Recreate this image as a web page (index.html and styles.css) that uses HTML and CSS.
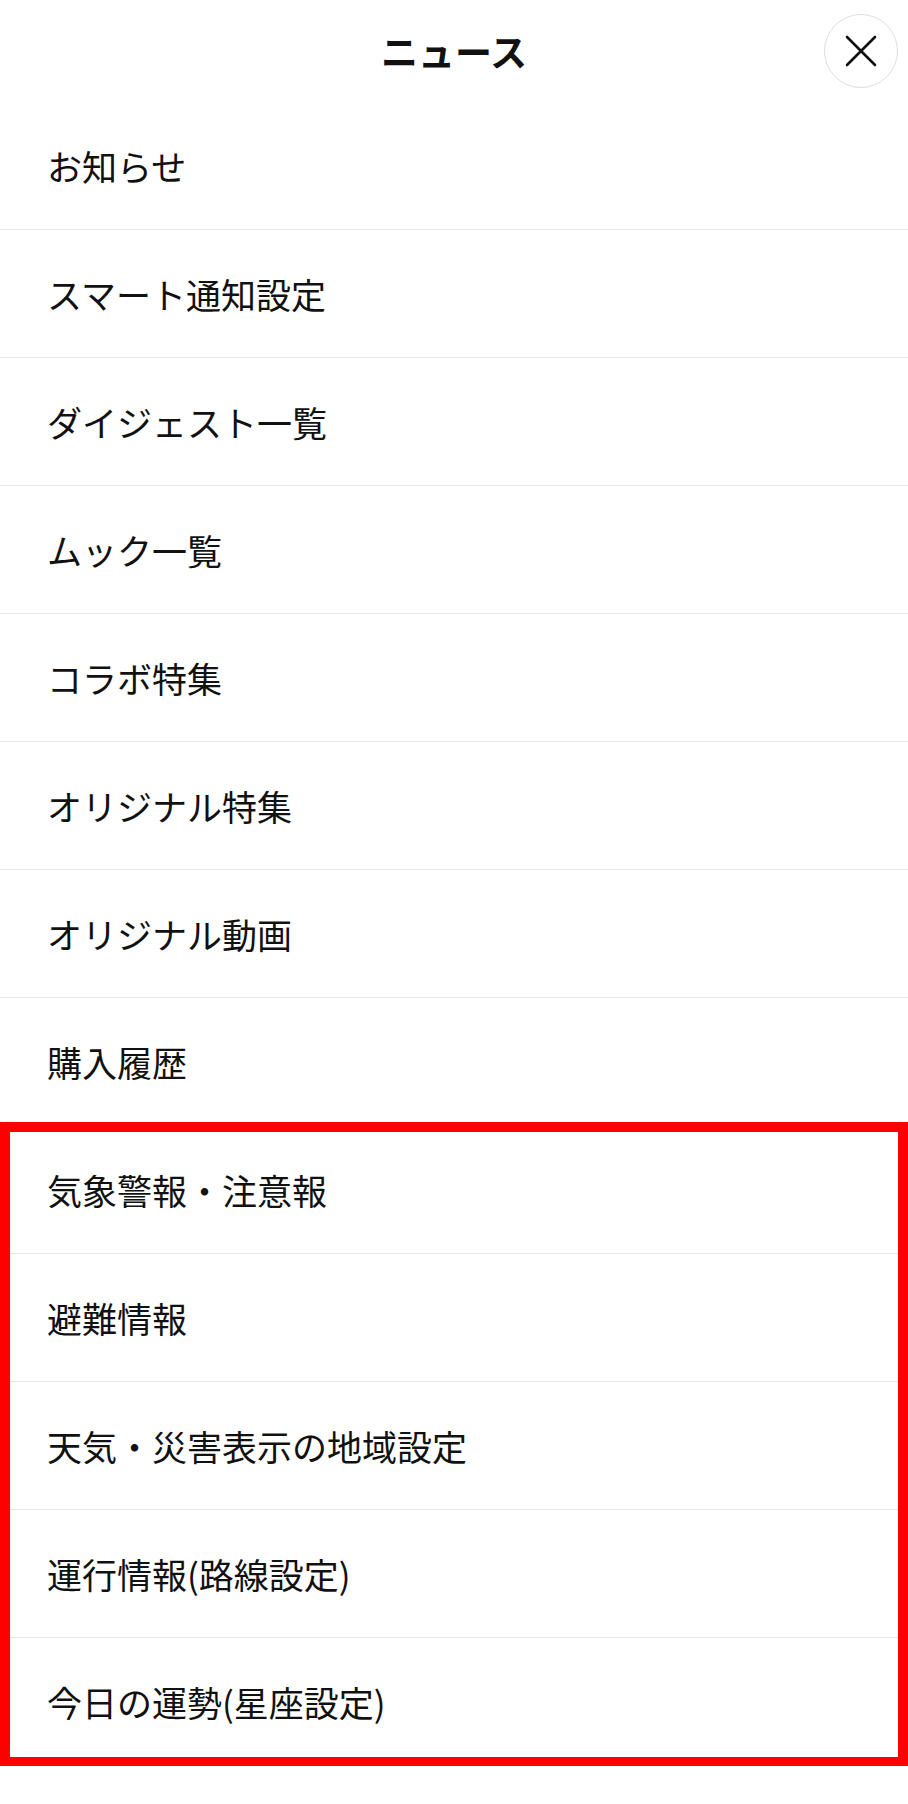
FILE: index.html
```html
<!DOCTYPE html>
<html lang="ja">
<head>
<meta charset="utf-8">
<title>ニュース</title>
<link rel="stylesheet" href="styles.css">
</head>
<body>
<div class="page">
  <header class="header">
    <div class="header-side"></div>
    <h1 class="title">ニュース</h1>
    <div class="header-side header-right">
      <button class="close" aria-label="閉じる">
        <svg width="32" height="32" viewBox="0 0 32 32" aria-hidden="true">
          <path d="M2 2 L30 30 M30 2 L2 30" stroke="#111" stroke-width="2.6" stroke-linecap="round" fill="none"/>
        </svg>
      </button>
    </div>
  </header>
  <ul class="menu">
    <li class="item">お知らせ</li>
    <li class="item">スマート通知設定</li>
    <li class="item">ダイジェスト一覧</li>
    <li class="item">ムック一覧</li>
    <li class="item">コラボ特集</li>
    <li class="item">オリジナル特集</li>
    <li class="item">オリジナル動画</li>
    <li class="item">購入履歴</li>
  </ul>
  <ul class="menu menu-highlight">
    <li class="item">気象警報・注意報</li>
    <li class="item">避難情報</li>
    <li class="item">天気・災害表示の地域設定</li>
    <li class="item">運行情報(路線設定)</li>
    <li class="item">今日の運勢(星座設定)</li>
  </ul>
</div>
</body>
</html>
```

FILE: styles.css
```css
* {
  box-sizing: border-box;
}

html, body {
  margin: 0;
  padding: 0;
  background: #ffffff;
}

body {
  font-family: "Noto Sans CJK JP", "Noto Sans", sans-serif;
  color: #111111;
}

.page {
  width: 908px;
}

.header {
  height: 102px;
  display: grid;
  grid-template-columns: 1fr auto 1fr;
  align-items: center;
}

.title {
  margin: 0;
  font-size: 37px;
  font-weight: 700;
  line-height: 1;
  letter-spacing: 0;
}

.header-right {
  display: flex;
  justify-content: flex-end;
  padding-right: 10px;
}

.close {
  width: 74px;
  height: 74px;
  border-radius: 50%;
  border: 1.5px solid #dedede;
  background: #ffffff;
  display: flex;
  align-items: center;
  justify-content: center;
  padding: 0;
  margin: 0;
}

.menu {
  list-style: none;
  margin: 0;
  padding: 0;
}

.item {
  height: 128px;
  display: flex;
  align-items: center;
  padding-left: 47px;
  font-size: 35px;
  font-weight: 400;
  line-height: 1;
  border-bottom: 1px solid #e5e5e5;
}

.menu-highlight {
  position: relative;
}

.menu-highlight::after {
  content: "";
  position: absolute;
  top: -4px;
  bottom: -1px;
  left: 0;
  right: 0;
  border: 10px solid #ff0000;
  pointer-events: none;
}
```
